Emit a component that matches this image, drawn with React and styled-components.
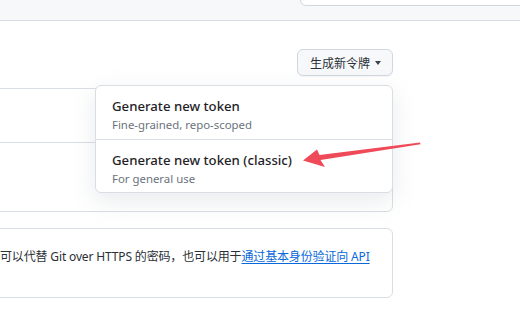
import React from "react";
import styled, { createGlobalStyle } from "styled-components";

const Global = createGlobalStyle`
  html, body { margin: 0; padding: 0; background: #ffffff; }
  body {
    width: 520px; height: 319px; overflow: hidden;
    font-family: "Segoe UI", "Noto Sans", "Noto Sans CJK SC", sans-serif;
    color: #1f2328;
  }
`;

const Page = styled.div`
  position: relative;
  width: 520px;
  height: 319px;
  overflow: hidden;
`;

const TopBand = styled.div`
  height: 20px;
  background: #f6f8fa;
  border-bottom: 1px solid #d8dee4;
  display: flex;
  justify-content: flex-end;
  overflow: hidden;
`;

const SearchBox = styled.div`
  width: 240px;
  height: 30px;
  margin-top: -26px;
  margin-right: -22px;
  background: #ffffff;
  border: 1px solid #d0d7de;
  border-radius: 6px;
`;

const Main = styled.div`
  width: 410px;
  margin-left: -17px;
  display: flex;
  flex-direction: column;
`;

const Header = styled.div`
  position: relative;
  display: flex;
  justify-content: flex-end;
  padding-top: 28px;
  height: 27px;
  margin-bottom: 12px;
`;

const Button = styled.button`
  height: 27px;
  display: flex;
  align-items: center;
  gap: 5px;
  padding: 0 11px 0 12px;
  background: #f6f8fa;
  border: 1px solid #d0d7de;
  border-radius: 6px;
  font-family: "Noto Sans CJK SC", sans-serif;
  font-size: 12px;
  color: #2b3036;
  box-shadow: 0 1px 0 rgba(31, 35, 40, 0.04);
`;

const Caret = styled.span`
  width: 0;
  height: 0;
  border-left: 3.5px solid transparent;
  border-right: 3.5px solid transparent;
  border-top: 4px solid #3d444d;
  margin-top: 1px;
`;

const Menu = styled.div`
  position: absolute;
  top: 64px;
  right: 0;
  width: 296px;
  background: #ffffff;
  border: 1px solid #d8dee4;
  border-radius: 6px;
  box-shadow: 0 8px 24px rgba(140, 149, 159, 0.2);
  z-index: 2;
  overflow: hidden;
`;

const MenuItem = styled.div`
  height: 53px;
  padding: 10px 16px 0 16px;
  box-sizing: border-box;
  border-top: ${(p) => (p.$last ? "1px solid #d8dee4" : "none")};
`;

const ItemTitle = styled.div`
  font-family: "Segoe UI", "Noto Sans", sans-serif;
  font-size: 13.2px;
  font-weight: 500;
  line-height: 20px;
  color: #1f2328;
`;

const ItemSub = styled.div`
  font-family: "Segoe UI", "Noto Sans", sans-serif;
  font-size: 11.4px;
  line-height: 17px;
  color: #6a737d;
`;

const Box = styled.div`
  border: 1px solid #d8dee4;
  border-radius: 6px;
  background: #ffffff;
  display: flex;
  flex-direction: column;
`;

const Row = styled.div`
  height: ${(p) => p.$h}px;
  border-top: ${(p) => (p.$first ? "none" : "1px solid #d8dee4")};
`;

const NoteBox = styled(Box)`
  margin-top: 16px;
  padding: 16px 16px 0 16px;
  box-sizing: border-box;
  height: 70px;
`;

const Note = styled.p`
  margin: 0;
  font-family: "Segoe UI", "Noto Sans", "Noto Sans CJK SC", sans-serif;
  font-size: 12px;
  letter-spacing: -0.15px;
  line-height: 24px;
  color: #2b3036;
  white-space: nowrap;
`;

const Link = styled.a`
  color: #0969da;
  text-decoration: underline;
  text-underline-offset: 2px;
`;

const Arrow = styled.svg`
  position: absolute;
  left: 0;
  top: 0;
  pointer-events: none;
  z-index: 3;
`;

export default function App() {
  return (
    <>
      <Global />
      <Page>
        <TopBand>
          <SearchBox />
        </TopBand>
        <Main>
          <Header>
            <Button>
              生成新令牌
              <Caret />
            </Button>
            <Menu>
              <MenuItem>
                <ItemTitle>Generate new token</ItemTitle>
                <ItemSub>Fine-grained, repo-scoped</ItemSub>
              </MenuItem>
              <MenuItem $last>
                <ItemTitle>Generate new token (classic)</ItemTitle>
                <ItemSub>For general use</ItemSub>
              </MenuItem>
            </Menu>
          </Header>
          <Box>
            <Row $first $h={53} />
            <Row $h={68} />
          </Box>
          <NoteBox>
            <Note>
              可以代替 Git over HTTPS 的密码，也可以用于
              <Link href="#">通过基本身份验证向 API</Link>
            </Note>
          </NoteBox>
        </Main>
        <Arrow width="520" height="319" viewBox="0 0 520 319">
          <polygon
            points="303,160.5 325,167 320.5,160 420.5,144.2 420,142.4 319.5,155 317,149.5"
            fill="#ef4a58"
          />
        </Arrow>
      </Page>
    </>
  );
}
